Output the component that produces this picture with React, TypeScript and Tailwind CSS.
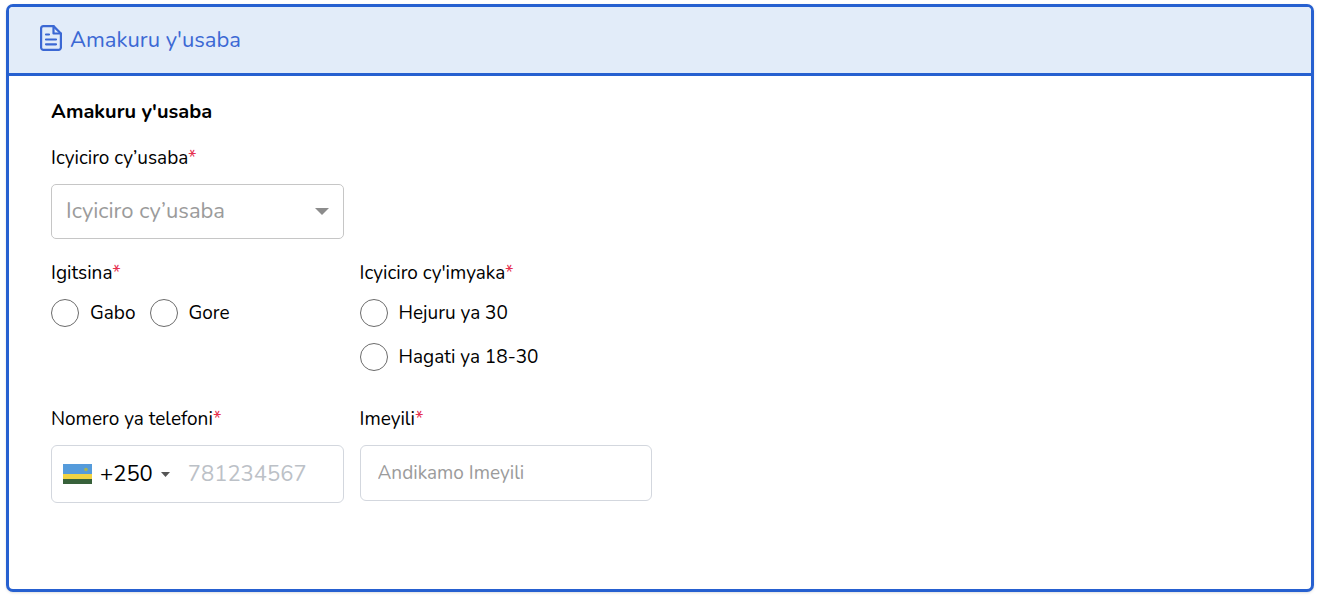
import { useId } from "react";
import type { ReactNode } from "react";

export default function App() {
  return (
    <div className="pt-1 pb-3 pl-[6px] pr-3 font-['Nunito','Open_Sans',sans-serif] text-black">
      <section className="overflow-hidden rounded-[7px] border-[3px] border-[#2660d0] bg-white shadow-sm">
        {/* Header */}
        <header className="flex h-[69px] items-center gap-2 border-b-[3px] border-[#2660d0] bg-[#e2ecf9] px-[31px] text-[#3b68d4]">
          <DocumentIcon />
          <h1 className="text-[22px] leading-7">Amakuru y'usaba</h1>
        </header>

        {/* Form */}
        <form className="px-[42px] pt-[22px] pb-[86px]">
          <h2 className="mb-[18px] text-[20px] leading-7 font-bold">Amakuru y'usaba</h2>

          <div className="grid grid-cols-4 gap-x-4 gap-y-5">
            <div>
              <FieldLabel htmlFor="category">Icyiciro cy’usaba</FieldLabel>
              <div className="relative">
                <select
                  id="category"
                  defaultValue=""
                  className="h-[55px] w-full appearance-none rounded-[5px] border border-[#c6c6c6] bg-white px-[14px] text-[22px] text-[#9b9b9b]"
                >
                  <option value="">Icyiciro cy’usaba</option>
                </select>
                <svg
                  className="pointer-events-none absolute top-6 right-[15px] h-[7px] w-[14px] text-[#8c8c8c]"
                  viewBox="0 0 14 7"
                  fill="currentColor"
                >
                  <path d="M0 0h14L7 7z" />
                </svg>
              </div>
            </div>

            <fieldset className="col-start-1">
              <GroupLabel>Igitsina</GroupLabel>
              <div className="flex gap-[14px]">
                <Radio name="gender" label="Gabo" />
                <Radio name="gender" label="Gore" />
              </div>
            </fieldset>

            <fieldset>
              <GroupLabel>Icyiciro cy'imyaka</GroupLabel>
              <div className="flex flex-col gap-4">
                <Radio name="age" label="Hejuru ya 30" />
                <Radio name="age" label="Hagati ya 18-30" />
              </div>
            </fieldset>

            <div className="col-start-1 pt-[14px]">
              <FieldLabel htmlFor="phone">Nomero ya telefoni</FieldLabel>
              <div className="flex h-[58px] items-center rounded-[6px] border border-[#d3d7de] pl-[11px] pr-3">
                <button type="button" className="flex shrink-0 items-center text-[22px]">
                  <RwandaFlag />
                  <span className="ml-2">+250</span>
                  <svg className="ml-2 h-[5px] w-[9px] text-[#555]" viewBox="0 0 9 5" fill="currentColor">
                    <path d="M0 0h9L4.500 5z" />
                  </svg>
                </button>
                <input
                  id="phone"
                  type="tel"
                  placeholder="781234567"
                  className="ml-[18px] w-full min-w-0 bg-transparent text-[22px] outline-none placeholder:text-[#bcc1c7]"
                />
              </div>
            </div>

            <div className="pt-[14px]">
              <FieldLabel htmlFor="email">Imeyili</FieldLabel>
              <input
                id="email"
                type="email"
                placeholder="Andikamo Imeyili"
                className="h-14 w-full rounded-[6px] border border-[#d3d7de] px-[17px] text-[19px] outline-none placeholder:text-[#9b9b9b]"
              />
            </div>
          </div>
        </form>
      </section>
    </div>
  );
}

function FieldLabel({ htmlFor, children }: { htmlFor: string; children: ReactNode }) {
  return (
    <label htmlFor={htmlFor} className="mb-3 block text-[19px] leading-7">
      {children}
      <span className="text-[#e5304f]">*</span>
    </label>
  );
}

function GroupLabel({ children }: { children: ReactNode }) {
  return (
    <legend className="mb-3 block text-[19px] leading-7">
      {children}
      <span className="text-[#e5304f]">*</span>
    </legend>
  );
}

function Radio({ name, label }: { name: string; label: string }) {
  const id = useId();
  return (
    <div className="flex items-center gap-[11px]">
      <input
        id={id}
        type="radio"
        name={name}
        className="size-7 shrink-0 appearance-none rounded-full border border-[#6b6b6b] bg-white checked:border-8 checked:border-[#2660d0]"
      />
      <label htmlFor={id} className="text-[19px] leading-7">
        {label}
      </label>
    </div>
  );
}

function DocumentIcon() {
  return (
    <svg
      className="-mt-1 h-[26px] w-[22px] shrink-0"
      viewBox="0 0 22 26"
      fill="none"
      stroke="currentColor"
      strokeWidth={2.2}
      strokeLinejoin="round"
      strokeLinecap="round"
    >
      <path d="M13.500 1.100H3.500A2.400 2.400 0 0 0 1.100 3.500v19A2.400 2.400 0 0 0 3.500 24.900h15a2.400 2.400 0 0 0 2.400-2.400V8.500z" />
      <path d="M13.500 1.100v7.400H20.900" />
      <path d="M6 9.500h3M6 14.500h10M6 19.300h10" />
    </svg>
  );
}

function RwandaFlag() {
  return (
    <svg className="h-5 w-[29px]" viewBox="0 0 29 20">
      <path fill="#559bdb" d="M0 0h29v10H0z" />
      <path fill="#f0d344" d="M0 10h29v5H0z" />
      <path fill="#37613a" d="M0 15h29v5H0z" />
      <circle cx="23" cy="5.500" r="1.800" fill="#a9b454" />
    </svg>
  );
}
